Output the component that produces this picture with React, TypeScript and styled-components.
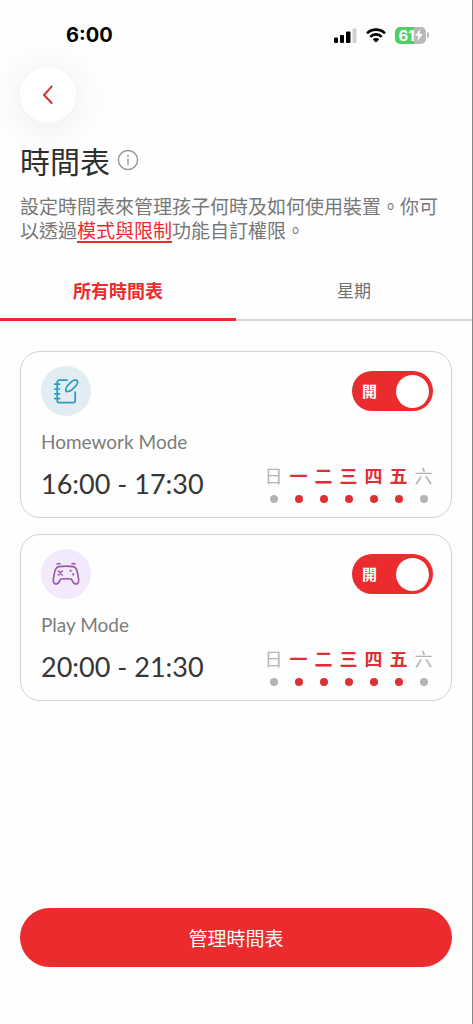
import { useState } from "react";
import styled, { createGlobalStyle, css } from "styled-components";

const red = "#eb2b2e";
const cjk = '"Noto Sans CJK TC", sans-serif';

const GlobalStyle = createGlobalStyle`
  * { box-sizing: border-box; }
  body { margin: 0; background: #fefefe; font-family: ${cjk}; color: #333; }
  button { font: inherit; color: inherit; border: 0; padding: 0; background: none; cursor: pointer; }
`;

const Screen = styled.div`
  min-height: 100vh;
  display: flex;
  flex-direction: column;
  background: #fefefe;
  border-right: 1px solid #858585;
`;

const StatusBar = styled.div`
  height: 67px;
  padding: 3px 43px 0 66px;
  display: flex;
  align-items: center;
  justify-content: space-between;
`;

const Clock = styled.time`
  font: 700 20px/24px Inter, sans-serif;
  color: #000;
`;

const StatusIcons = styled.div`
  display: flex;
  align-items: center;
  gap: 9px;
`;

const Battery = styled.div`
  display: flex;
  align-items: center;
  gap: 1px;
`;

const BatteryCell = styled.div`
  width: 31px;
  height: 17px;
  border-radius: 5px;
  display: flex;
  align-items: center;
  justify-content: center;
  background: linear-gradient(90deg, #4fd063 61%, #b9b9b9 61%);
  color: #fff;
  font: 700 15px/17px Inter, sans-serif;
`;

const BatteryTip = styled.div`
  width: 2px;
  height: 6px;
  border-radius: 0 2px 2px 0;
  background: #b9b9b9;
`;

const Header = styled.header`
  padding: 0 20px;
`;

const BackButton = styled.button`
  width: 56px;
  height: 56px;
  border-radius: 50%;
  display: grid;
  place-items: center;
  background: #fff;
  box-shadow: 0 4px 40px rgba(0, 0, 0, 0.09);
`;

const TitleRow = styled.div`
  display: flex;
  align-items: center;
  gap: 7px;
  margin-top: 17px;
`;

const Title = styled.h1`
  margin: 0;
  font-size: 30px;
  line-height: 40px;
  font-weight: 400;
  color: #2f2f2f;
`;

const InfoButton = styled.button`
  display: flex;
`;

const Intro = styled.p`
  margin: 14px 0 0;
  font-size: 19px;
  line-height: 24px;
  font-weight: 400;
  color: #777;
`;

const IntroLink = styled.a`
  color: ${red};
  text-decoration: underline;
  text-decoration-thickness: 2px;
  text-underline-offset: 3px;
`;

const Tabs = styled.div`
  display: grid;
  grid-template-columns: 1fr 1fr;
  margin-top: 20px;
`;

const Tab = styled.button<{ $active: boolean }>`
  height: 59px;
  padding-bottom: 3px;
  display: flex;
  align-items: center;
  justify-content: center;
  line-height: 24px;
  ${(p) =>
    p.$active
      ? css`
          color: ${red};
          font-size: 18px;
          font-weight: 700;
          box-shadow: inset 0 -3px ${red};
        `
      : css`
          color: #707070;
          font-size: 17px;
          font-weight: 400;
          box-shadow: inset 0 -2px #d6d6d6;
        `}
`;

const CardList = styled.main`
  display: flex;
  flex-direction: column;
  gap: 16px;
  padding: 30px 20px;
`;

const Card = styled.section`
  padding: 14px 18px 14px 20px;
  border: 1px solid #d2d2d2;
  border-radius: 20px;
`;

const CardRow = styled.div`
  display: flex;
  align-items: center;
  justify-content: space-between;
`;

const ModeIcon = styled.div<{ $bg: string }>`
  width: 50px;
  height: 50px;
  border-radius: 50%;
  display: grid;
  place-items: center;
  background: ${(p) => p.$bg};
`;

const ModeName = styled.h2`
  margin: 14px 0 11px;
  font: 400 19px/24px Lato, sans-serif;
  color: #7c7c7c;
`;

const TimeRange = styled.div`
  font: 400 27px/38px Lato, sans-serif;
  color: #363636;
`;

const Switch = styled.label<{ $on: boolean }>`
  position: relative;
  width: 81px;
  height: 40px;
  padding: 0 4px 0 10px;
  border-radius: 20px;
  display: flex;
  flex-direction: ${(p) => (p.$on ? "row" : "row-reverse")};
  align-items: center;
  justify-content: space-between;
  background: ${(p) => (p.$on ? red : "#b9b9b9")};
  color: #fff;
  font-size: 15px;
  line-height: 20px;
  font-weight: 700;
  cursor: pointer;
`;

const SwitchInput = styled.input`
  position: absolute;
  inset: 0;
  width: 100%;
  height: 100%;
  margin: 0;
  opacity: 0;
  cursor: pointer;
`;

const Knob = styled.span`
  width: 33px;
  height: 33px;
  border-radius: 50%;
  background: #fff;
`;

const Days = styled.ul`
  list-style: none;
  margin: 0;
  padding: 0;
  display: flex;
  gap: 6px;
`;

const Day = styled.li<{ $on: boolean }>`
  display: flex;
  flex-direction: column;
  align-items: center;
  gap: 10px;
  width: 19px;
  font-size: 18px;
  line-height: 20px;
  font-weight: ${(p) => (p.$on ? 700 : 400)};
  color: ${(p) => (p.$on ? "#de2f34" : "#b5b5b5")};

  &::after {
    content: "";
    width: 8px;
    height: 8px;
    border-radius: 50%;
    background: currentColor;
  }
`;

const Footer = styled.footer`
  margin-top: auto;
  padding: 0 20px 57px;
`;

const ManageButton = styled.button`
  width: 100%;
  height: 59px;
  border-radius: 30px;
  background: ${red};
  color: #fff;
  font-size: 19px;
  line-height: 24px;
`;

const SignalIcon = () => (
  <svg width="24" height="16" viewBox="0 0 24 16" aria-hidden="true">
    <rect x="1" y="10.5" width="4" height="5.5" rx="1" />
    <rect x="7" y="8" width="4" height="8" rx="1" />
    <rect x="13" y="4.5" width="4.5" height="11.5" rx="1" />
    <rect x="19.500" y="1.5" width="4" height="14.5" rx="1" fill="#d0d0d0" />
  </svg>
);

const WifiIcon = () => (
  <svg width="20" height="15" viewBox="0 0 20 15" fill="none" stroke="#000" strokeWidth="2.6" aria-hidden="true">
    <path d="M1 5.3a12.8 12.8 0 0 1 18 0" />
    <path d="M4.3 8.8a8 8 0 0 1 11.4 0" />
    <path d="M10 14.6 6.8 11.4a4.5 4.5 0 0 1 6.4 0z" fill="#000" stroke="none" />
  </svg>
);

const BoltIcon = () => (
  <svg width="8" height="12" viewBox="0 0 8 12" fill="#fff" aria-hidden="true">
    <path d="M5.2 0 0.3 6.8h3L2.6 12l5.1-7H4.6z" />
  </svg>
);

const ChevronIcon = () => (
  <svg width="24" height="24" viewBox="0 0 24 24" fill="none" stroke="#d03438" strokeWidth="2" strokeLinecap="round" strokeLinejoin="round" aria-hidden="true">
    <path d="M15.6 3.6 8 12l7.6 8" />
  </svg>
);

const InfoIcon = () => (
  <svg width="22" height="22" viewBox="0 0 22 22" fill="none" stroke="#9a9a9a" aria-hidden="true">
    <circle cx="11" cy="11" r="9.6" strokeWidth="1.5" />
    <path d="M11 10v5.4" strokeWidth="1.4" strokeLinecap="round" />
    <circle cx="11" cy="7" r="1" fill="#9a9a9a" stroke="none" />
  </svg>
);

const HomeworkIcon = () => (
  <svg width="26" height="26" viewBox="0 0 26 26" fill="none" stroke="#2a9cc0" strokeWidth="1.7" strokeLinecap="round" strokeLinejoin="round" aria-hidden="true">
    <path d="M14 2.2H6.200a2 2 0 0 0-2 2v18.400a2 2 0 0 0 2 2h14a2 2 0 0 0 2-2v-8.600" />
    <path d="M1.800 6.200h4.800M1.800 11h4.800M1.800 15.800h4.800M1.800 20.600h4.800" />
    <path d="M13 13.400C12.500 10.600 13.200 8.800 15 7L19.200 3.200C21.200 1.600 23 1.600 24 2.600S24.800 5.200 23.200 7.200L19.400 11.400C17.600 13.200 15.800 13.900 13 13.400Z" />
  </svg>
);

const PlayIcon = () => (
  <svg width="28" height="24" viewBox="0 0 28 24" fill="none" stroke="#9a57a8" strokeWidth="1.6" strokeLinecap="round" strokeLinejoin="round" aria-hidden="true">
    <path d="M6.800 4.600Q14 3.600 21.200 4.600C23.600 5 24.500 6.800 25.300 9.800L26.600 16.800C27.100 19.800 26 22 24 22C22.300 22 21.300 21 20.600 19.400L19.400 17Q14 16.400 8.600 17L7.400 19.400C6.700 21 5.700 22 4 22C2 22 .9 19.800 1.400 16.800L2.700 9.800C3.500 6.800 4.400 5 6.800 4.600Z" />
    <path d="M5 2.100Q6.400 1.300 8 1.700M23 2.100Q21.600 1.300 20 1.700" />
    <path d="m6.300 9 4 4m0-4-4 4" />
    <g fill="#9a57a8" stroke="none">
      <circle cx="18.6" cy="8.8" r="1.1" />
      <circle cx="21.2" cy="12.4" r="1.1" />
    </g>
  </svg>
);

const weekdays = ["日", "一", "二", "三", "四", "五", "六"];

const schedules = [
  { name: "Homework Mode", time: "16:00 - 17:30", bg: "#e1edf3", Icon: HomeworkIcon, days: [1, 2, 3, 4, 5] },
  { name: "Play Mode", time: "20:00 - 21:30", bg: "#f2e9fd", Icon: PlayIcon, days: [1, 2, 3, 4, 5] },
];

function ScheduleCard({ name, time, bg, Icon, days }: (typeof schedules)[number]) {
  const [on, setOn] = useState(true);
  return (
    <Card>
      <CardRow>
        <ModeIcon $bg={bg}>
          <Icon />
        </ModeIcon>
        <Switch $on={on}>
          <SwitchInput type="checkbox" role="switch" aria-label={name} checked={on} onChange={() => setOn(!on)} />
          <span>{on ? "開" : "關"}</span>
          <Knob />
        </Switch>
      </CardRow>
      <ModeName>{name}</ModeName>
      <CardRow>
        <TimeRange>{time}</TimeRange>
        <Days>
          {weekdays.map((day, i) => (
            <Day key={day} $on={days.includes(i)}>
              {day}
            </Day>
          ))}
        </Days>
      </CardRow>
    </Card>
  );
}

export default function App() {
  const [tab, setTab] = useState(0);
  return (
    <Screen lang="zh-Hant">
      <GlobalStyle />
      <StatusBar>
        <Clock>6:00</Clock>
        <StatusIcons>
          <SignalIcon />
          <WifiIcon />
          <Battery>
            <BatteryCell>
              61
              <BoltIcon />
            </BatteryCell>
            <BatteryTip />
          </Battery>
        </StatusIcons>
      </StatusBar>
      <Header>
        <BackButton aria-label="返回">
          <ChevronIcon />
        </BackButton>
        <TitleRow>
          <Title>時間表</Title>
          <InfoButton aria-label="說明">
            <InfoIcon />
          </InfoButton>
        </TitleRow>
        <Intro>
          設定時間表來管理孩子何時及如何使用裝置。你可以透過<IntroLink href="#modes">模式與限制</IntroLink>功能自訂權限。
        </Intro>
      </Header>
      <Tabs role="tablist">
        {["所有時間表", "星期"].map((label, i) => (
          <Tab key={label} role="tab" aria-selected={tab === i} $active={tab === i} onClick={() => setTab(i)}>
            {label}
          </Tab>
        ))}
      </Tabs>
      <CardList>
        {schedules.map((s) => (
          <ScheduleCard key={s.name} {...s} />
        ))}
      </CardList>
      <Footer>
        <ManageButton>管理時間表</ManageButton>
      </Footer>
    </Screen>
  );
}
